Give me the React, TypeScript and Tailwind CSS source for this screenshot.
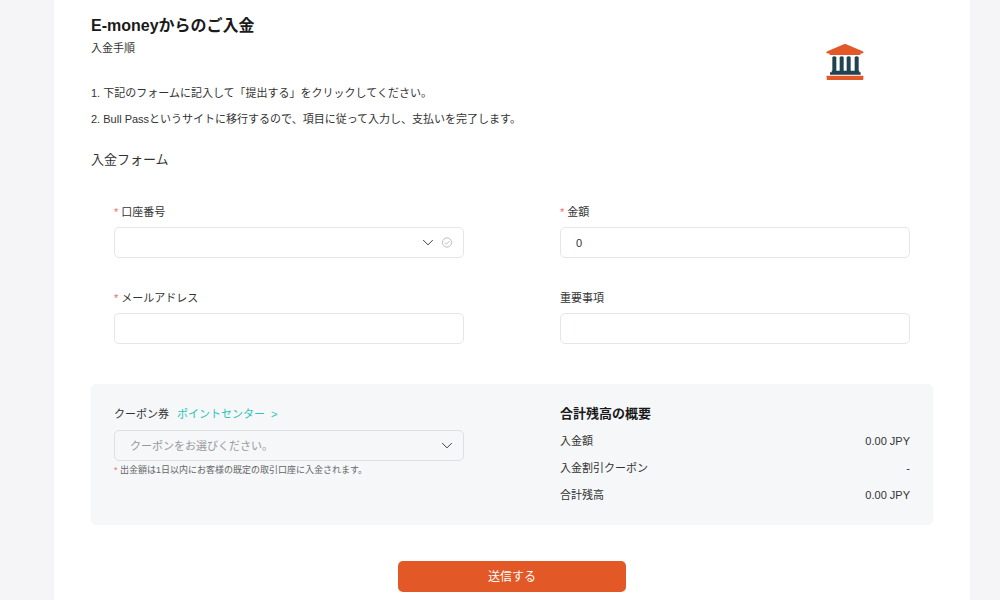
import { useState } from 'react'
import type { ReactNode } from 'react'

const steps = [
  '1. 下記のフォームに記入して「提出する」をクリックしてください。',
  '2. Bull Passというサイトに移行するので、項目に従って入力し、支払いを完了します。',
]

const summary = [
  { label: '入金額', value: '0.00 JPY' },
  { label: '入金割引クーポン', value: '-' },
  { label: '合計残高', value: '0.00 JPY' },
]

const control =
  'block h-[31px] w-full appearance-none rounded-[5px] border px-[15px] text-[11px] text-[#333333] focus:outline-none focus:border-[#e25826]'

export default function App() {
  const [account, setAccount] = useState('')
  const [amount, setAmount] = useState('0')
  const [email, setEmail] = useState('')
  const [note, setNote] = useState('')
  const [coupon, setCoupon] = useState('')

  return (
    <div
      lang="ja"
      className="min-h-screen bg-[#f5f5f7] pl-[54px] pr-[30px] font-['Liberation_Sans','Noto_Sans_CJK_JP',sans-serif] text-[11px] leading-5 text-[#333333]"
    >
      <main className="min-h-screen bg-white px-[37px] pt-4 pb-2">
        <header className="flex justify-between">
          <div>
            <h1 className="text-base leading-5 font-bold text-[#1a1a1a]">E-moneyからのご入金</h1>
            <p className="mt-0.5">入金手順</p>
            <div className="mt-[22px] leading-[26px]">
              {steps.map(step => (
                <p key={step}>{step}</p>
              ))}
            </div>
          </div>
          <BankIcon />
        </header>

        <form onSubmit={e => e.preventDefault()}>
          <h2 className="mt-[18px] text-[13px] leading-5">入金フォーム</h2>

          <div className="mt-8 grid grid-cols-2 gap-x-24 gap-y-[30px] px-[23px]">
            <Field id="account" label="口座番号" required>
              <div className="relative">
                <select
                  id="account"
                  value={account}
                  onChange={e => setAccount(e.target.value)}
                  className={`${control} border-[#e4e6e8] bg-white`}
                >
                  <option value=""></option>
                </select>
                <div className="pointer-events-none absolute inset-y-0 right-[11px] flex items-center gap-[7px]">
                  <Chevron />
                  <CheckCircle />
                </div>
              </div>
            </Field>
            <Field id="amount" label="金額" required>
              <input
                id="amount"
                type="text"
                inputMode="decimal"
                value={amount}
                onChange={e => setAmount(e.target.value)}
                className={`${control} border-[#e4e6e8] bg-white`}
              />
            </Field>
            <Field id="email" label="メールアドレス" required>
              <input
                id="email"
                type="email"
                value={email}
                onChange={e => setEmail(e.target.value)}
                className={`${control} border-[#e4e6e8] bg-white`}
              />
            </Field>
            <Field id="note" label="重要事項">
              <input
                id="note"
                type="text"
                value={note}
                onChange={e => setNote(e.target.value)}
                className={`${control} border-[#e4e6e8] bg-white`}
              />
            </Field>
          </div>

          <section className="mt-10 grid grid-cols-2 gap-x-24 rounded-[5px] bg-[#f5f7f9] px-[23px] pt-5 pb-4">
            <div>
              <div className="flex gap-2">
                <label htmlFor="coupon">クーポン券</label>
                <a href="#points" className="text-[#2ec4b6]">
                  ポイントセンター &nbsp;&gt;
                </a>
              </div>
              <div className="relative mt-1.5">
                <select
                  id="coupon"
                  value={coupon}
                  onChange={e => setCoupon(e.target.value)}
                  className={`${control} border-[#dddfe2] bg-transparent text-[#999999]`}
                >
                  <option value="">クーポンをお選びください。</option>
                </select>
                <div className="pointer-events-none absolute inset-y-0 right-[11px] flex items-center">
                  <Chevron />
                </div>
              </div>
              <p className="text-[9px] leading-[18px] text-[#666666]">
                <span className="text-[#f56c6c]">*</span> 出金額は1日以内にお客様の既定の取引口座に入金されます。
              </p>
            </div>

            <div>
              <h3 className="text-[13px] leading-5 font-bold text-[#1a1a1a]">合計残高の概要</h3>
              <dl className="mt-1 leading-[27px]">
                {summary.map(row => (
                  <div key={row.label} className="flex justify-between">
                    <dt>{row.label}</dt>
                    <dd>{row.value}</dd>
                  </div>
                ))}
              </dl>
            </div>
          </section>

          <button
            type="submit"
            className="mx-auto mt-9 block h-[31px] w-[228px] rounded-[5px] bg-[#e25826] text-xs text-white hover:bg-[#d14d1e]"
          >
            送信する
          </button>
        </form>
      </main>
    </div>
  )
}

function Field({
  id,
  label,
  required,
  children,
}: {
  id: string
  label: string
  required?: boolean
  children: ReactNode
}) {
  return (
    <div>
      <label htmlFor={id} className="mb-[5px] flex gap-[3px]">
        {required && <span className="text-[#f56c6c]">*</span>}
        {label}
      </label>
      {children}
    </div>
  )
}

function Chevron() {
  return (
    <svg width="12" height="12" viewBox="0 0 12 12" fill="none" stroke="#444444" aria-hidden="true">
      <path d="M1.2 3 6 7.9 10.8 3" />
    </svg>
  )
}

function CheckCircle() {
  return (
    <svg width="12" height="12" viewBox="0 0 12 12" fill="none" stroke="#b9bdc3" aria-hidden="true">
      <circle cx="6" cy="5.5" r="4.6" />
      <path d="m3.7 5.5 1.7 1.7 3-3.1" />
    </svg>
  )
}

function BankIcon() {
  return (
    <svg width="38" height="38" viewBox="0 0 114 114" className="mt-[27px] mr-[69px]" aria-hidden="true">
      <path
        fill="#e25826"
        d="M57 2 110 25c3 2 3 5 1 6l-8 1v4H11v-4l-8-1c-3-1-2-4 1-6z"
      />
      <g fill="#1f4350">
        <path d="M19 42q6-5 12 0v44H19zM41 42q6-5 12 0v44H41zM62 42q6-5 12 0v44H62zM86 42q6-5 12 0v44H86z" />
        <path d="M17 83h83v5h4v7H12v-7h5z" />
      </g>
      <rect x="2" y="98" width="110" height="13" rx="2" fill="#e25826" />
    </svg>
  )
}
